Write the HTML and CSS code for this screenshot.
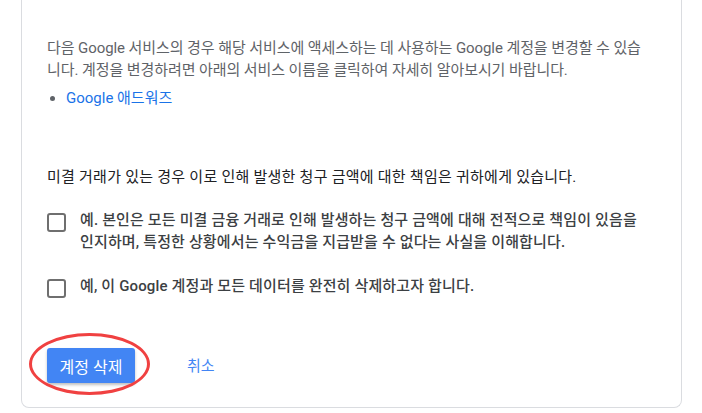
FILE: index.html
```html
<!DOCTYPE html>
<html lang="ko">
<head>
<meta charset="utf-8">
<title>계정 삭제</title>
<link rel="stylesheet" href="styles.css">
</head>
<body>
<div class="card">
  <p class="intro">다음 Google 서비스의 경우 해당 서비스에 액세스하는 데 사용하는 Google 계정을 변경할 수 있습<br>니다. 계정을 변경하려면 아래의 서비스 이름을 클릭하여 자세히 알아보시기 바랍니다.</p>
  <ul class="services">
    <li><a class="link" href="#">Google 애드워즈</a></li>
  </ul>
  <p class="notice">미결 거래가 있는 경우 이로 인해 발생한 청구 금액에 대한 책임은 귀하에게 있습니다.</p>
  <label class="check">
    <span class="box"></span>
    <span class="check-text">예. 본인은 모든 미결 금융 거래로 인해 발생하는 청구 금액에 대해 전적으로 책임이 있음을<br>인지하며, 특정한 상황에서는 수익금을 지급받을 수 없다는 사실을 이해합니다.</span>
  </label>
  <label class="check check-second">
    <span class="box"></span>
    <span class="check-text">예, 이 Google 계정과 모든 데이터를 완전히 삭제하고자 합니다.</span>
  </label>
  <div class="actions">
    <div class="primary-wrap">
      <button class="btn-primary" type="button">계정 삭제</button>
      <span class="highlight"></span>
    </div>
    <a class="btn-cancel" href="#">취소</a>
  </div>
</div>
</body>
</html>
```
FILE: styles.css
```css
html, body {
  margin: 0;
  padding: 0;
  background: #ffffff;
}

body {
  font-family: Roboto, "Noto Sans CJK KR", sans-serif;
  font-size: 15px;
  line-height: 22px;
}

.card {
  box-sizing: border-box;
  margin-left: 21px;
  width: 661px;
  height: 408px;
  border: 1px solid #dadce0;
  border-top: none;
  border-radius: 0 0 8px 8px;
  padding: 37px 20px 0 25px;
}

.intro {
  margin: 0;
  color: #5f6368;
  letter-spacing: -0.08px;
}

.services {
  margin: 6px 0 0 0;
  padding-left: 19px;
  color: #5f6368;
}

.link {
  color: #1a73e8;
  text-decoration: none;
}

.notice {
  margin: 57px 0 0 0;
  color: #202124;
  letter-spacing: 0.25px;
}

.check {
  display: flex;
  align-items: flex-start;
  gap: 14px;
  margin-top: 21px;
  color: #3c4043;
  font-weight: 500;
  letter-spacing: 0.15px;
}

.check-second {
  margin-top: 22px;
}

.box {
  flex: none;
  box-sizing: border-box;
  width: 19px;
  height: 19px;
  margin-top: 4px;
  border: 2px solid #6f6f6f;
  border-radius: 3px;
}

.actions {
  display: flex;
  align-items: center;
  margin-top: 50px;
}

.primary-wrap {
  position: relative;
}

.btn-primary {
  display: block;
  box-sizing: border-box;
  width: 88px;
  height: 35px;
  border: none;
  border-radius: 3px;
  background: #4285f4;
  color: #ffffff;
  font-family: Roboto, "Noto Sans CJK KR", sans-serif;
  font-size: 16px;
  padding: 0;
  box-shadow: 0 2px 3px rgba(0, 0, 0, 0.25);
}

.highlight {
  position: absolute;
  left: -18px;
  top: -15px;
  width: 121px;
  height: 62px;
  box-sizing: border-box;
  border: 3px solid #f04141;
  border-radius: 50%;
}

.btn-cancel {
  margin-left: 52px;
  color: #4285f4;
  text-decoration: none;
  font-size: 15px;
}
```
